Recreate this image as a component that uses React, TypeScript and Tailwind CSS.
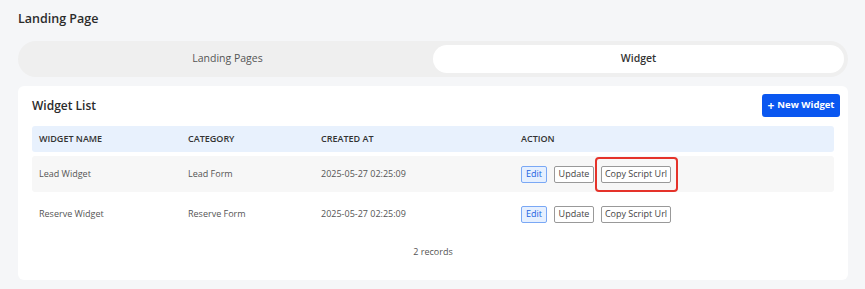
import React from 'react';

type Widget = { name: string; category: string; createdAt: string };

const widgets: Widget[] = [
  { name: 'Lead Widget', category: 'Lead Form', createdAt: '2025-05-27 02:25:09' },
  { name: 'Reserve Widget', category: 'Reserve Form', createdAt: '2025-05-27 02:25:09' },
];

const App: React.FC = () => {
  return (
    <div
      className="min-h-[289px] w-[865px] bg-[#f5f6f8] px-[18px] pt-[11px] text-[#333]"
      style={{ fontFamily: '"Open Sans", "DejaVu Sans", sans-serif' }}
    >
      {/* Page title */}
      <h1 className="text-[12.5px] font-semibold leading-[16px] text-[#2b2b2b]">Landing Page</h1>

      {/* Tabs */}
      <div className="mt-[14px] flex h-[36px] w-[830px] rounded-full bg-[#efefef] p-[4px]">
        <button className="flex-1 rounded-full text-[10.5px] text-[#555]">Landing Pages</button>
        <button className="flex-1 rounded-full bg-white text-[10.5px] font-semibold text-[#333]">
          Widget
        </button>
      </div>

      {/* Card */}
      <div className="mt-[9px] w-[830px] rounded-[6px] bg-white pl-[14px] pr-[8px] pt-[8px] pb-[21px]">
        <div className="flex items-center justify-between">
          <h2 className="text-[12px] font-semibold text-[#2b2b2b]">Widget List</h2>
          <button className="flex h-[23px] w-[78px] items-center justify-center gap-[3px] rounded-[3px] bg-[#0a57f0] text-[9.5px] font-bold text-white">
            <span className="text-[12px] leading-none">+</span>New Widget
          </button>
        </div>

        {/* Table */}
        <div className="mt-[9px] mr-[6px]">
          <div className="flex h-[26px] items-center rounded-[3px] bg-[#e8f1fd] text-[9px] font-semibold text-[#333]">
            <div className="w-[149px] pl-[7px]">WIDGET NAME</div>
            <div className="w-[133px] pl-[7px]">CATEGORY</div>
            <div className="w-[200px] pl-[7px]">CREATED AT</div>
            <div className="flex-1 pl-[7px]">ACTION</div>
          </div>

          <div className="mt-[4px] flex flex-col gap-[4px]">
            {widgets.map((w, i) => (
              <div
                key={w.name}
                className={`flex h-[36px] items-center rounded-[3px] text-[9px] text-[#555] ${
                  i === 0 ? 'bg-[#f7f7f7]' : 'bg-white'
                }`}
              >
                <div className="w-[149px] pl-[7px]">{w.name}</div>
                <div className="w-[133px] pl-[7px]">{w.category}</div>
                <div className="w-[200px] pl-[7px]">{w.createdAt}</div>
                <div className="flex flex-1 items-center gap-[7px] pl-[7px]">
                  <button className="h-[17px] w-[26px] rounded-[2px] border border-[#7aa8f5] bg-[#e6f0ff] text-[9px] font-medium text-[#1a5fe0]">
                    Edit
                  </button>
                  <button className="h-[17px] w-[40px] rounded-[2px] border border-[#999] bg-white text-[9px] text-[#444]">
                    Update
                  </button>
                  <div className="relative">
                    <button className="h-[17px] w-[70px] rounded-[2px] border border-[#999] bg-white text-[9px] text-[#444]">
                      Copy Script Url
                    </button>
                    {i === 0 && (
                      <div className="pointer-events-none absolute -left-[6px] -top-[9px] h-[35px] w-[83px] rounded-[4px] border-2 border-[#e5332a]" />
                    )}
                  </div>
                </div>
              </div>
            ))}
          </div>

          <div className="mt-[13px] text-center text-[9px] text-[#555]">2 records</div>
        </div>
      </div>
    </div>
  );
};

export default App;
